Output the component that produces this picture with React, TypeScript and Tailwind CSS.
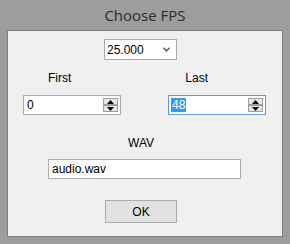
import React from "react"

function Spinner() {
  return (
    <div className="flex flex-col gap-0 mr-[2px]">
      <div className="w-[15px] h-[7px] border border-[#a0a0a0] bg-[#e6e6e6] flex items-center justify-center">
        <svg width="7" height="4" viewBox="0 0 7 4">
          <path d="M3.5 0 L7 4 L0 4 Z" fill="#000" />
        </svg>
      </div>
      <div className="w-[15px] h-[7px] border border-[#a0a0a0] bg-[#e6e6e6] flex items-center justify-center">
        <svg width="7" height="4" viewBox="0 0 7 4">
          <path d="M0 0 L7 0 L3.5 4 Z" fill="#000" />
        </svg>
      </div>
    </div>
  )
}

function SpinInput({ value, focused }: { value: string; focused?: boolean }) {
  return (
    <div
      className={
        focused
          ? "w-[98px] h-[20px] bg-white border border-[#569de5] flex items-center justify-between pl-[2px]"
          : "w-[98px] h-[20px] bg-white border border-[#abadb3] flex items-center justify-between pl-[2px]"
      }
    >
      {focused ? (
        <span className="bg-[#3399ff] text-white leading-[14px] px-[1px]">{value}</span>
      ) : (
        <span className="leading-[14px] px-[1px]">{value}</span>
      )}
      <Spinner />
    </div>
  )
}

export default function App() {
  return (
    <div
      className="w-[290px] h-[244px] bg-[#9d9d9d] flex flex-col px-[7px] pb-[7px] text-[12px] text-black"
      style={{ fontFamily: '"Liberation Sans", Arial, sans-serif' }}
    >
      {/* Title bar */}
      <div
        className="h-[30px] flex items-center justify-center text-[15px] text-[#2b2b2b]"
        style={{ fontFamily: '"Open Sans", "Noto Sans", sans-serif' }}
      >
        Choose FPS
      </div>

      {/* Client area */}
      <div className="flex-1 bg-[#f0f0f0] border border-[#7e7e7e] flex flex-col">
        <div className="ml-[96px] mt-[8px] w-[73px] h-[21px] bg-white border border-[#acacac] flex items-center justify-between pl-[2px] pr-[6px]">
          <span className="leading-[14px]">25.000</span>
          <svg width="7" height="5" viewBox="0 0 7 5">
            <path d="M0.5 0.8 L3.5 3.8 L6.5 0.8" fill="none" stroke="#666" strokeWidth="1.6" />
          </svg>
        </div>

        <div className="flex mt-[11px] h-[14px] leading-[14px]">
          <span className="ml-[40px]">First</span>
          <span className="ml-[114px]">Last</span>
        </div>

        <div className="flex mt-[10px]">
          <div className="ml-[15px]">
            <SpinInput value="0" />
          </div>
          <div className="ml-[47px]">
            <SpinInput value="48" focused />
          </div>
        </div>

        <div className="mt-[21px] h-[14px] leading-[14px] pl-[120px]">WAV</div>

        <div className="ml-[40px] mt-[9px] w-[193px] h-[20px] bg-white border border-[#abadb3] flex items-center pl-[3px]">
          <span className="leading-[14px]">audio.wav</span>
        </div>

        <button className="ml-[97px] mt-[21px] w-[72px] h-[23px] bg-[#e1e1e1] border border-[#adadad] flex items-center justify-center leading-[14px]">
          OK
        </button>
      </div>
    </div>
  )
}
